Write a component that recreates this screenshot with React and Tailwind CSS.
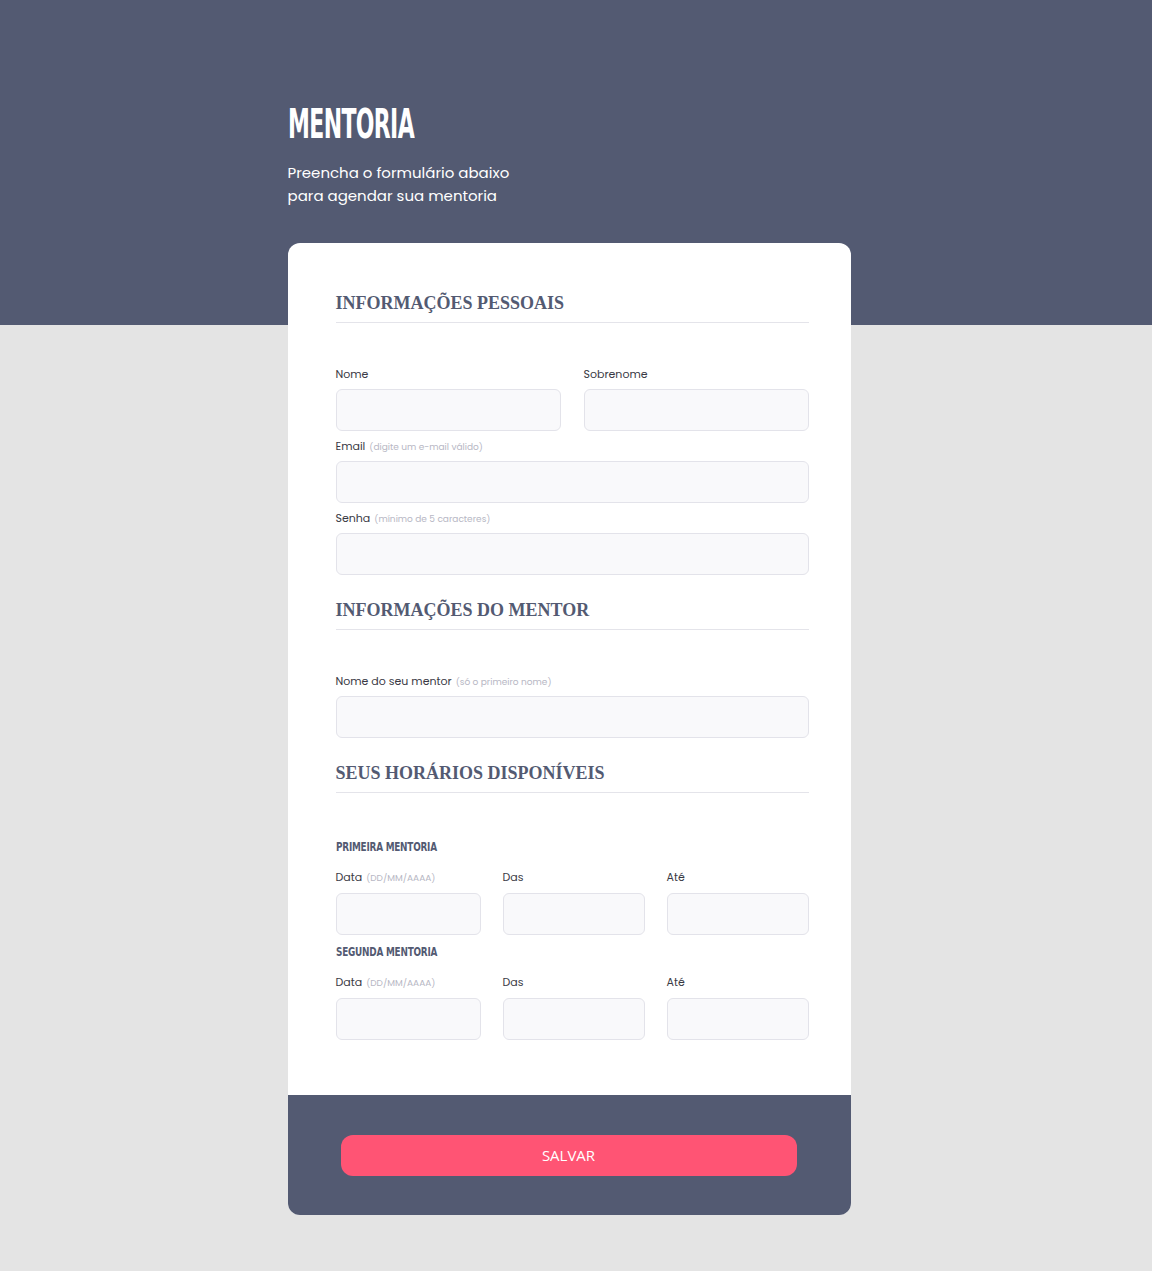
import React from 'react'

const Field = ({ label, hint, className = '', gap = 'mt-[7px]' }) => (
  <div className={`flex flex-col ${className}`}>
    <label className="h-4 flex items-baseline text-[11px] leading-4 text-[#3a3a45] font-['Poppins',Inter,sans-serif] whitespace-nowrap">
      {label}
      {hint && <span className="text-[9px] leading-4 text-[#b7b7c4] ml-1">{hint}</span>}
    </label>
    <input className={`${gap} h-[42px] w-full rounded-md border border-[#e3e3ea] bg-[#f9f9fb]`} />
  </div>
)

const SectionTitle = ({ children, className = '' }) => (
  <div className={`border-b border-[#e4e4ea] pb-[9px] ${className}`}>
    <h2 className="font-['Liberation_Serif',serif] font-bold text-[18px] leading-5 text-[#535a72]">
      {children}
    </h2>
  </div>
)

const SubTitle = ({ children, className = '' }) => (
  <h3 className={`font-['DejaVu_Sans_Condensed',sans-serif] font-bold text-[13px] leading-4 text-[#535a72] scale-x-[0.76] origin-left tracking-[-0.3px] ${className}`}>
    {children}
  </h3>
)

const ScheduleRow = () => (
  <div className="flex gap-[22px] mt-[14px]">
    <Field label="Data" hint="(DD/MM/AAAA)" className="w-[145px]" gap="mt-[8px]" />
    <Field label="Das" className="w-[142px]" gap="mt-[8px]" />
    <Field label="Até" className="w-[142px]" gap="mt-[8px]" />
  </div>
)

export default function App() {
  return (
    <div className="min-h-[1271px] bg-[#e4e4e4] font-['Poppins',Inter,sans-serif]">
      {/* Header */}
      <div className="bg-[#535a72] h-[325px] pr-[14px]">
        <div className="w-[563px] mx-auto pt-[104px]">
          <h1 className="font-['DejaVu_Sans_Condensed',sans-serif] font-bold text-white text-[40px] leading-[40px] scale-x-[0.61] origin-left tracking-[-1px]">
            MENTORIA
          </h1>
          <p className="mt-[17px] text-white text-[15px] leading-[23px]">
            Preencha o formulário abaixo
            <br />
            para agendar sua mentoria
          </p>
        </div>
      </div>

      {/* Card */}
      <div className="pr-[14px] pb-[56px]">
        <div className="w-[563px] mx-auto -mt-[82px] rounded-xl overflow-hidden bg-white">
          <div className="pl-[48px] pr-[42px] pt-[50px] pb-[55px]">
            <SectionTitle>INFORMAÇÕES PESSOAIS</SectionTitle>

            <div className="flex gap-[23px] mt-[43px]">
              <Field label="Nome" className="flex-1" />
              <Field label="Sobrenome" className="flex-1" />
            </div>
            <Field label="Email" hint="(digite um e-mail válido)" className="mt-[7px]" />
            <Field label="Senha" hint="(mínimo de 5 caracteres)" className="mt-[7px]" />

            <SectionTitle className="mt-[25px]">INFORMAÇÕES DO MENTOR</SectionTitle>
            <Field label="Nome do seu mentor" hint="(só o primeiro nome)" className="mt-[43px]" />

            <SectionTitle className="mt-[25px]">SEUS HORÁRIOS DISPONÍVEIS</SectionTitle>

            <SubTitle className="mt-[46px]">PRIMEIRA MENTORIA</SubTitle>
            <ScheduleRow />
            <SubTitle className="mt-[9px]">SEGUNDA MENTORIA</SubTitle>
            <ScheduleRow />
          </div>

          {/* Footer */}
          <div className="bg-[#535a72] h-[120px] flex items-center pl-[53px]">
            <button className="w-[456px] h-[41px] rounded-xl bg-[#ff5474] text-white text-[15px] font-['Open_Sans',sans-serif]">
              SALVAR
            </button>
          </div>
        </div>
      </div>
    </div>
  )
}
